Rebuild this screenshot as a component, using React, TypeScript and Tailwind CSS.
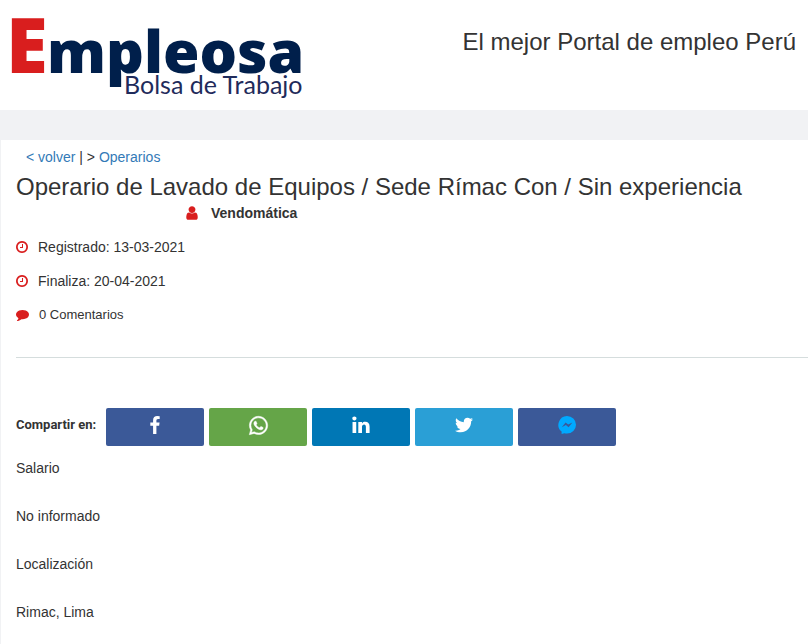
import type { ReactNode } from "react";
import { FaTwitter, FaWhatsapp } from "react-icons/fa";
import { clsx } from "clsx";

interface IconProps {
  className?: string;
}

interface ShareLink {
  label: string;
  color: string;
  icon: ReactNode;
}

const shareLinks: ShareLink[] = [
  { label: "Facebook",  color: "bg-[#3b5998]", icon: <FacebookIcon className="size-[18px]" />                 },
  { label: "WhatsApp",  color: "bg-[#65a548]", icon: <FaWhatsapp className="size-[21px] stroke-[12]" />       },
  { label: "LinkedIn",  color: "bg-[#0077b5]", icon: <LinkedinIcon className="size-[18px]" />                 },
  { label: "Twitter",   color: "bg-[#2a9fd6]", icon: <FaTwitter className="size-[18px]" />                    },
  { label: "Messenger", color: "bg-[#3b5998]", icon: <MessengerIcon className="size-[18px] text-[#00a9ff]" /> },
];

const details = [
  { term: "Salario",      value: "No informado" },
  { term: "Localización", value: "Rimac, Lima"  },
];

function UserIcon({ className }: IconProps) {
  return (
    <svg viewBox="0 0 1792 1792" className={className} fill="currentColor" aria-hidden="true">
      <path d="M1536 1399q0 109-62.5 187t-150.5 78h-854q-88 0-150.5-78t-62.5-187q0-85 8.5-160.5t31.5-152 58.5-131 94-89 134.5-34.5q131 128 313 128t313-128q76 0 134.5 34.5t94 89 58.5 131 31.5 152 8.5 160.5zm-256-887q0 159-112.5 271.5t-271.5 112.5-271.5-112.5-112.5-271.5 112.5-271.5 271.5-112.5 271.5 112.5 112.5 271.5z" />
    </svg>
  );
}

function ClockIcon({ className }: IconProps) {
  return (
    <svg viewBox="128 128 1536 1536" className={className} fill="currentColor" aria-hidden="true">
      <path d="M1024 544v448q0 14-9 23t-23 9h-320q-14 0-23-9t-9-23v-64q0-14 9-23t23-9h224v-352q0-14 9-23t23-9h64q14 0 23 9t9 23zm416 352q0-148-73-273t-198-198-273-73-273 73-198 198-73 273 73 273 198 198 273 73 273-73 198-198 73-273zm224 0q0 209-103 385.5t-279.5 279.5-385.5 103-385.5-103-279.5-279.5-103-385.5 103-385.5 279.5-279.5 385.5-103 385.5 103 279.5 279.5 103 385.5z" />
    </svg>
  );
}

function CommentIcon({ className }: IconProps) {
  return (
    <svg viewBox="0 128 1792 1536" className={className} fill="currentColor" aria-hidden="true">
      <path d="M1792 896q0 174-120 321.5t-326 233-450 85.5q-70 0-145-8-198 175-460 242-49 14-114 22-17 2-30.5-9t-17.5-29v-1q-3-4-.5-12t2-10 4.5-9.5l6-9 7-8.5 8-9q7-8 31-34.5t34.5-38 31-39.5 32.5-51 27-59 26-76q-157-89-247.5-220t-90.5-281q0-174 120-321.5t326-233 450-85.5 450 85.5 326 233 120 321.5z" />
    </svg>
  );
}

function FacebookIcon({ className }: IconProps) {
  return (
    <svg viewBox="79 0 1664 1664" className={className} fill="currentColor" aria-hidden="true">
      <path d="M1343 12v264h-157q-86 0-116 36t-30 108v189h293l-39 296h-254v759h-306v-759h-255v-296h255v-218q0-186 104-288.5t277-102.5q147 0 228 12z" />
    </svg>
  );
}

function LinkedinIcon({ className }: IconProps) {
  return (
    <svg viewBox="100 100 1600 1600" className={className} fill="currentColor" aria-hidden="true">
      <path d="M477 625v991h-330v-991h330zm21-306q1 73-50.5 122t-135.5 49h-2q-82 0-132-49t-50-122q0-74 51.5-122.5t134.5-48.5 133 48.5 51 122.5zm1166 729v568h-329v-530q0-105-40.5-164.5t-126.5-59.5q-63 0-105.5 34.5t-63.5 85.5q-11 30-11 81v553h-329q2-399 2-647t-1-296l-1-48h329v144h-2q20-32 41-56t56.5-52 87-43.5 114.5-15.5q171 0 275 113.5t104 332.5z" />
    </svg>
  );
}

function MessengerIcon({ className }: IconProps) {
  return (
    <svg viewBox="0 0 18 18" className={className} aria-hidden="true">
      <path fill="currentColor" d="M9 0a9 8.8 0 0 1 0 17.6q-1.4 0-2.6-.4L3.6 18v-2.4A8.8 8.8 0 0 1 9 0z" />
      <path fill="#3b5998" d="M3.8 11.2 7.6 6.4l2.6 2.2 4.2-2.2-3.8 4.8-2.7-2.2z" />
    </svg>
  );
}

function Logo() {
  return (
    <svg width="310" height="110" viewBox="0 0 310 110" className="overflow-visible font-['Open_Sans',sans-serif]">
      <text x="6" y="73" fontSize="76" fontWeight="800" fill="#d91e1e">E</text>
      <text x="47" y="73" fontSize="59" fontWeight="800" fill="#001f4b">mpleosa</text>
      <text x="124" y="94" fontSize="25" fill="#1f2b5b" className="font-['Lato',sans-serif]">Bolsa de Trabajo</text>
    </svg>
  );
}

export default function App() {
  return (
    <div className="flex min-h-screen flex-col bg-white font-['Liberation_Sans',Arial,sans-serif] text-sm text-[#333]">
      <header className="flex items-start justify-between">
        <a href="#" aria-label="Empleosa">
          <Logo />
        </a>
        <p className="px-3 pt-6 text-2xl leading-9">El mejor Portal de empleo Perú</p>
      </header>
      <div className="h-[30px] bg-[#f1f2f4]" />

      <main className="flex-1 border-l border-[#f1f2f4] pl-[15px]">
        <nav className="px-2.5 pt-[7px] leading-5">
          <a href="#" className="text-[#337ab7]">&lt; volver</a> | &gt;{" "}
          <a href="#" className="text-[#337ab7]">Operarios</a>
        </nav>

        <h1 className="pt-1 text-2xl leading-8">Operario de Lavado de Equipos / Sede Rímac Con / Sin experiencia</h1>

        <div className="flex items-center gap-[11px] pl-[168px] leading-5 font-bold">
          <UserIcon className="size-4 text-[#d91e1e]" />
          Vendomática
        </div>

        <ul className="flex flex-col gap-3.5 pt-3.5 leading-5">
          <li className="flex items-center gap-2.5">
            <ClockIcon className="size-3 text-[#d91e1e]" />
            Registrado: 13-03-2021
          </li>
          <li className="flex items-center gap-2.5">
            <ClockIcon className="size-3 text-[#d91e1e]" />
            Finaliza: 20-04-2021
          </li>
          <li className="flex items-center gap-2.5 text-[13px]">
            <CommentIcon className="w-[13px] text-[#d91e1e]" />
            0 Comentarios
          </li>
        </ul>

        <hr className="mt-8 border-[#d5dddd]" />

        <div className="flex items-center gap-2.5 pt-[50px]">
          <span className="pb-1 font-['Roboto',sans-serif] text-[13px] font-bold">Compartir en:</span>
          <div className="flex gap-[5px]">
            {shareLinks.map((link) => (
              <a
                key={link.label}
                href="#"
                aria-label={link.label}
                className={clsx("flex h-[38px] w-[98px] items-center justify-center rounded-xs pb-1 text-white", link.color)}
              >
                {link.icon}
              </a>
            ))}
          </div>
        </div>

        <dl className="flex flex-col gap-7 py-3 leading-5">
          {details.map((item) => (
            <div key={item.term} className="flex flex-col gap-7">
              <dt>{item.term}</dt>
              <dd>{item.value}</dd>
            </div>
          ))}
        </dl>
      </main>
    </div>
  );
}
